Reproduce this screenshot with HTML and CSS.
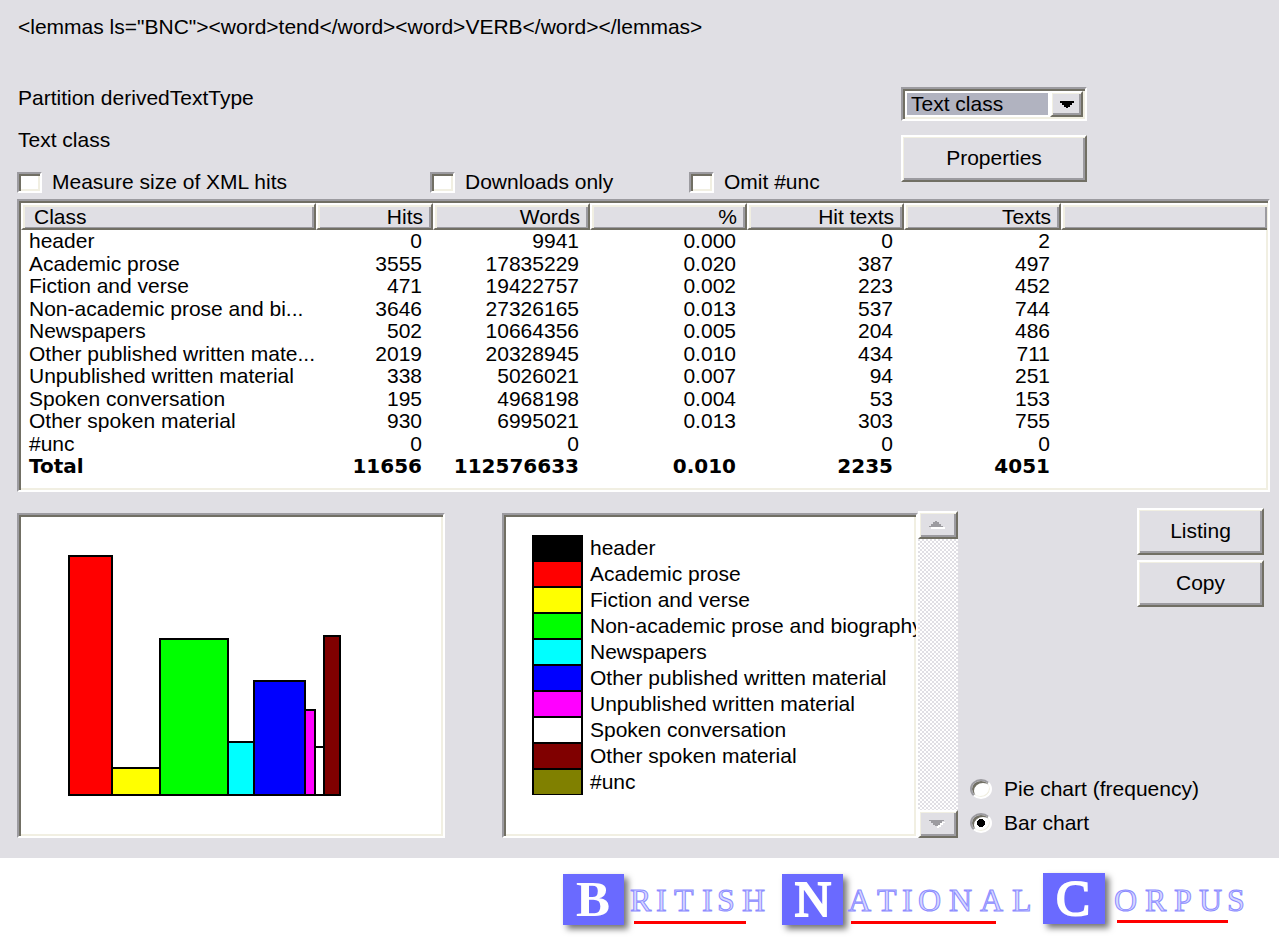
FILE: index.html
```html
<!DOCTYPE html>
<html lang="en">
<head>
<meta charset="utf-8">
<title>Partition derivedTextType</title>
<link rel="stylesheet" href="styles.css">
</head>
<body>
<main class="panel">
  <p class="query">&lt;lemmas ls="BNC"&gt;&lt;word&gt;tend&lt;/word&gt;&lt;word&gt;VERB&lt;/word&gt;&lt;/lemmas&gt;</p>

  <section class="settings">
    <div class="details">
      <p>Partition derivedTextType</p>
      <p>Text class</p>
      <div class="options">
        <label class="option"><input class="tick" type="checkbox">Measure size of XML hits</label>
        <label class="option"><input class="tick" type="checkbox">Downloads only</label>
        <label class="option"><input class="tick" type="checkbox">Omit #unc</label>
      </div>
    </div>
    <div class="pickers">
      <div class="combo sunken">
        <select class="combo-select" aria-label="Partition">
          <option>Text class</option>
        </select>
        <span class="combo-arrow raised"><svg width="14" height="7" viewBox="0 0 14 7" shape-rendering="crispEdges"><path d="M0 0h14v2h-2v2h-2v2h-2v1h-2v-1h-2v-2h-2v-2h-2z"/></svg></span>
      </div>
      <button class="button raised" type="button">Properties</button>
    </div>
  </section>

  <div class="table-box sunken">
    <table class="results">
      <colgroup>
        <col class="col-class"><col class="col-hits"><col class="col-num"><col class="col-num"><col class="col-num"><col class="col-num"><col>
      </colgroup>
      <thead>
        <tr><th>Class</th><th>Hits</th><th>Words</th><th>%</th><th>Hit texts</th><th>Texts</th><th></th></tr>
      </thead>
      <tbody>
        <tr><td>header</td><td>0</td><td>9941</td><td>0.000</td><td>0</td><td>2</td><td></td></tr>
        <tr><td>Academic prose</td><td>3555</td><td>17835229</td><td>0.020</td><td>387</td><td>497</td><td></td></tr>
        <tr><td>Fiction and verse</td><td>471</td><td>19422757</td><td>0.002</td><td>223</td><td>452</td><td></td></tr>
        <tr><td>Non-academic prose and bi...</td><td>3646</td><td>27326165</td><td>0.013</td><td>537</td><td>744</td><td></td></tr>
        <tr><td>Newspapers</td><td>502</td><td>10664356</td><td>0.005</td><td>204</td><td>486</td><td></td></tr>
        <tr><td>Other published written mate...</td><td>2019</td><td>20328945</td><td>0.010</td><td>434</td><td>711</td><td></td></tr>
        <tr><td>Unpublished written material</td><td>338</td><td>5026021</td><td>0.007</td><td>94</td><td>251</td><td></td></tr>
        <tr><td>Spoken conversation</td><td>195</td><td>4968198</td><td>0.004</td><td>53</td><td>153</td><td></td></tr>
        <tr><td>Other spoken material</td><td>930</td><td>6995021</td><td>0.013</td><td>303</td><td>755</td><td></td></tr>
        <tr><td>#unc</td><td>0</td><td>0</td><td></td><td>0</td><td>0</td><td></td></tr>
        <tr class="total"><td>Total</td><td>11656</td><td>112576633</td><td>0.010</td><td>2235</td><td>4051</td><td></td></tr>
      </tbody>
    </table>
  </div>

  <section class="lower">
    <div class="chart sunken">
      <svg class="bars" width="420" height="317" viewBox="21 517 420 317" role="img" aria-label="Bar chart of frequency by class">
        <g stroke="#000" stroke-width="2">
          <rect x="69" y="556" width="43" height="239" fill="#f00"/>
          <rect x="112" y="768" width="48" height="27" fill="#ff0"/>
          <rect x="160" y="639" width="68" height="156" fill="#0f0"/>
          <rect x="228" y="742" width="26" height="53" fill="#0ff"/>
          <rect x="254" y="681" width="51" height="114" fill="#00f"/>
          <rect x="305" y="710" width="10" height="85" fill="#f0f"/>
          <rect x="315" y="747" width="9" height="48" fill="#fff"/>
          <rect x="324" y="636" width="16" height="159" fill="#800000"/>
        </g>
      </svg>
    </div>

    <div class="legend-area">
      <div class="legend-box sunken">
        <ul class="legend">
          <li><span class="swatch black"></span>header</li>
          <li><span class="swatch red"></span>Academic prose</li>
          <li><span class="swatch yellow"></span>Fiction and verse</li>
          <li><span class="swatch green"></span>Non-academic prose and biography</li>
          <li><span class="swatch cyan"></span>Newspapers</li>
          <li><span class="swatch blue"></span>Other published written material</li>
          <li><span class="swatch magenta"></span>Unpublished written material</li>
          <li><span class="swatch white"></span>Spoken conversation</li>
          <li><span class="swatch maroon"></span>Other spoken material</li>
          <li><span class="swatch olive"></span>#unc</li>
        </ul>
      </div>
      <div class="scrollbar">
        <button class="scroll-button raised" type="button" aria-label="Scroll up"><svg width="18" height="10" viewBox="0 0 18 10" shape-rendering="crispEdges"><path fill="#fff" d="M2 7h14v2h-14z"/><path fill="#9c9ba0" d="M0 7v-1h2v-2h2v-2h2v-1h2v1h2v2h2v2h2v1z"/></svg></button>
        <button class="scroll-button raised" type="button" aria-label="Scroll down"><svg width="18" height="10" viewBox="0 0 18 10" shape-rendering="crispEdges"><path fill="#fff" d="M13 3h3v1h-2v2h-2v2h-2v1h-2v-2z"/><path fill="#9c9ba0" d="M0 1h15v1h-2v2h-2v2h-2v1h-3v-1h-2v-2h-2v-2h-2z"/></svg></button>
      </div>
    </div>

    <div class="actions">
      <div class="action-buttons">
        <button class="button raised" type="button">Listing</button>
        <button class="button raised" type="button">Copy</button>
      </div>
      <div class="modes">
        <label class="mode"><input class="radio" type="radio" name="chart">Pie chart (frequency)</label>
        <label class="mode"><input class="radio" type="radio" name="chart" checked>Bar chart</label>
      </div>
    </div>
  </section>
</main>

<footer class="footer">
  <svg class="logo" width="719" height="90" viewBox="560 858 719 90" role="img" aria-label="British National Corpus">
    <defs>
      <filter id="shadow" x="-20%" y="-20%" width="150%" height="150%"><feDropShadow dx="4" dy="4" stdDeviation="3" flood-color="#000" flood-opacity="0.55"/></filter>
    </defs>
    <g fill="#6b6bff" filter="url(#shadow)">
      <rect x="563" y="874" width="61" height="51"/>
      <rect x="782" y="874" width="61" height="51"/>
      <rect x="1043" y="873" width="62" height="51"/>
    </g>
    <text class="capital heavy" x="593" y="916">B</text>
    <text class="capital" x="813" y="916">N</text>
    <text class="capital" x="1073" y="915">C</text>
    <g class="engraved">
      <text x="630 656 674 702 717 742" y="911">RITISH</text>
      <text x="848 877 902 918 949 980 1012" y="911">ATIONAL</text>
      <text x="1114 1145 1174 1199 1227" y="911">ORPUS</text>
    </g>
    <g fill="#f00">
      <rect x="634" y="921" width="112" height="3"/>
      <rect x="851" y="921" width="145" height="3"/>
      <rect x="1117" y="920" width="111" height="3"/>
    </g>
  </svg>
</footer>
</body>
</html>
```
FILE: styles.css
```css
* { box-sizing: border-box; }

body {
  margin: 0;
  background: #fff;
  color: #000;
  font: 21px/24px "Liberation Sans", Arial, sans-serif;
}

p { margin: 0; }

button, select { font: inherit; color: inherit; }

svg { display: block; }

.panel {
  background: #e0dfe4;
  padding: 15px 9px 20px 17px;
}

.sunken {
  background: #fff;
  border: 2px solid;
  border-color: #9c9ba0 #fff #fff #9c9ba0;
  box-shadow: inset 2px 2px #716f64, inset -2px -2px #f1efe2;
}

.raised {
  background: #e0dfe4;
  border: 2px solid;
  border-color: #fff #716f64 #716f64 #fff;
  border-radius: 0;
  box-shadow: inset 1px 1px #f1efe2, inset -2px -2px #9c9ba0;
}

.query { padding-left: 1px; }

.settings {
  display: flex;
  margin-top: 47px;
  padding-right: 183px;
}

.details {
  flex: 1;
  display: flex;
  flex-direction: column;
  gap: 18px;
  padding-left: 1px;
}

.options {
  display: grid;
  grid-template-columns: 413fr 259fr 212fr;
  margin-left: -1px;
}

.option {
  display: flex;
  align-items: center;
  gap: 10px;
}

.tick {
  appearance: none;
  width: 25px;
  height: 21px;
  margin: 0;
  background: #fff;
  border: 2px solid;
  border-color: #9c9ba0 #fff #fff #9c9ba0;
  box-shadow: inset 2px 2px #716f64, inset -2px -2px #f1efe2;
}

.pickers {
  width: 186px;
  display: flex;
  flex-direction: column;
  gap: 14px;
  padding-top: 1px;
}

.combo {
  display: flex;
  height: 34px;
  padding: 2px;
}

.combo-select {
  appearance: none;
  flex: 1;
  min-width: 0;
  background: #b1b3c0;
  border: 2px solid #fff;
  border-radius: 0;
  padding: 0 4px;
  line-height: 22px;
}

.combo-arrow {
  width: 33px;
  display: grid;
  place-items: center;
}

.button {
  height: 47px;
  padding: 0 0 2px;
}

.table-box {
  margin-top: 5px;
  padding: 2px 1px 13px 2px;
}

.results {
  width: 100%;
  table-layout: fixed;
  border-collapse: separate;
  border-spacing: 0;
}

.col-class { width: 295px; }
.col-hits { width: 117px; }
.col-num { width: 157px; }

.results th {
  height: 27px;
  padding: 0 8px;
  background: #e0dfe4;
  border: 2px solid;
  border-color: #fff #716f64 #716f64 #fff;
  box-shadow: inset 2px 2px #f1efe2, inset -2px -1px #9c9ba0;
  font-weight: 400;
  line-height: 22px;
  text-align: right;
}

.results th:first-child {
  padding-left: 11px;
  text-align: left;
}

.results th:last-child { border-right: 0; }

.results td {
  height: 22px;
  padding: 0 11px 0 0;
  line-height: 22px;
  text-align: right;
  white-space: nowrap;
}

.results tr:nth-child(even) td { height: 23px; }

.results td:first-child {
  padding: 0 0 0 8px;
  text-align: left;
}

.results .total td {
  font: 700 20px/22px "DejaVu Sans", Verdana, sans-serif;
}

.lower {
  display: grid;
  grid-template-columns: minmax(0, 428fr) 57px minmax(0, 456fr) 12px minmax(0, 300fr);
  margin-top: 16px;
}

.chart {
  grid-column: 1;
  margin-top: 5px;
  padding: 2px;
}

.bars { max-width: 100%; }

.legend-area {
  grid-column: 3;
  display: flex;
  padding-top: 3px;
}

.legend-box {
  flex: 1;
  min-width: 0;
  margin-top: 2px;
  padding: 20px 0 20px 28px;
}

.legend {
  margin: 0;
  padding: 0;
  list-style: none;
  overflow: hidden;
}

.legend li {
  display: flex;
  align-items: center;
  gap: 7px;
  height: 26px;
  line-height: 26px;
  white-space: nowrap;
}

.swatch {
  flex: none;
  width: 51px;
  height: 26px;
  border: 1px solid #000;
  border-width: 1px 2px;
}

.black { background: #000; }
.red { background: #f00; }
.yellow { background: #ff0; }
.green { background: #0f0; }
.cyan { background: #0ff; }
.blue { background: #00f; }
.magenta { background: #f0f; }
.white { background: #fff; }
.maroon { background: #800000; }
.olive { background: #808000; }

.scrollbar {
  width: 40px;
  display: flex;
  flex-direction: column;
  justify-content: space-between;
  background: repeating-conic-gradient(#fff 0 25%, #e0dfe4 0 50%) 0 0 / 4px 4px;
}

.scroll-button {
  height: 28px;
  padding: 0;
  display: grid;
  place-items: center;
}

.actions {
  grid-column: 5;
  display: flex;
  flex-direction: column;
  justify-content: space-between;
  padding-right: 6px;
}

.action-buttons {
  align-self: flex-end;
  width: 127px;
  display: flex;
  flex-direction: column;
  gap: 5px;
}

.modes {
  display: flex;
  flex-direction: column;
  gap: 10px;
  padding-bottom: 3px;
}

.mode {
  display: flex;
  align-items: center;
  gap: 12px;
}

.radio {
  appearance: none;
  width: 22px;
  height: 20px;
  margin: 0;
  background: #fff;
  border: 2px solid;
  border-color: #9c9ba0 #fff #fff #9c9ba0;
  border-radius: 50%;
  box-shadow: inset 2px 2px #716f64, inset -1px -1px #f1efe2;
}

.radio:checked { background: radial-gradient(circle, #000 0 4px, #fff 4px); }

.footer {
  display: flex;
  justify-content: flex-end;
}

.capital {
  fill: #fff;
  stroke: #fff;
  stroke-width: 2px;
  font: 51px "Liberation Serif", "Times New Roman", serif;
  text-anchor: middle;
}

.heavy {
  stroke: none;
  font-weight: 700;
}

.engraved {
  fill: #d8d8ff;
  stroke: #8c8cff;
  stroke-width: 1px;
  font: 32px "Liberation Serif", "Times New Roman", serif;
}
```
